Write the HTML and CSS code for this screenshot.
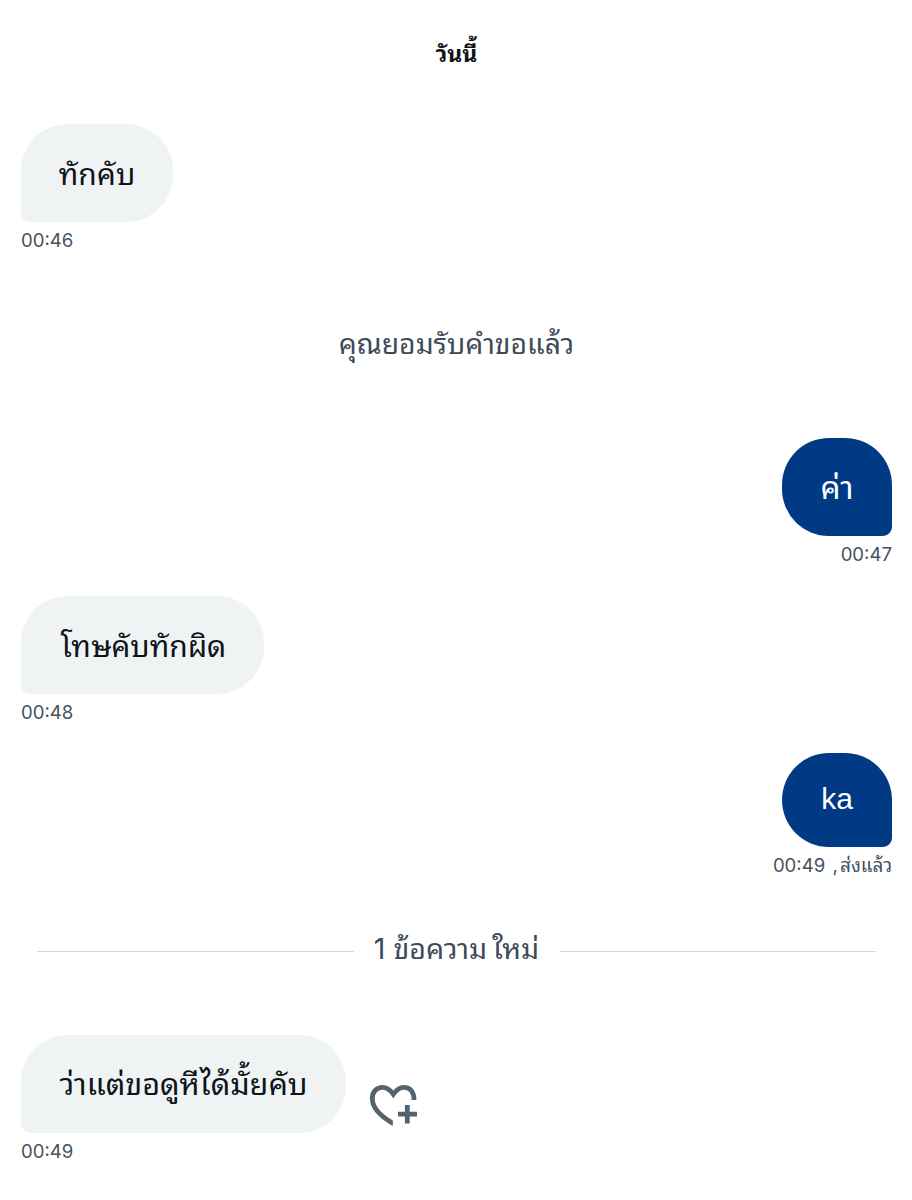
FILE: index.html
```html
<!DOCTYPE html>
<html lang="th"><head><meta charset="utf-8"><title>ข้อความ</title><link rel="stylesheet" href="styles.css"></head>
<body><main class="chat">
<h1 class="day"><span>วันนี้</span></h1>
<section class="message first"><div class="bubble b1"><span>ทักคับ</span></div><time>00:46</time></section>
<p class="notice"><span>คุณยอมรับคำขอแล้ว</span></p>
<section class="message sent second"><div class="bubble b2"><span>ค่า</span></div><time>00:47</time></section>
<section class="message third"><div class="bubble b3"><span>โทษคับทักผิด</span></div><time>00:48</time></section>
<section class="message sent fourth"><div class="bubble b4"><span>ka</span></div><time>00:49 <span class="status">, ส่งแล้ว</span></time></section>
<div class="divider"><span>1 ข้อความ<span class="new">ใหม่</span></span></div>
<section class="message fifth"><div class="row"><div class="bubble b5"><span>ว่าแต่ขอดูหีได้มั้ยคับ</span></div>
<svg class="heart" width="50" height="44" viewBox="0 0 50 44" aria-label="เพิ่มการตอบสนอง"><clipPath id="heart-edge"><path d="M0 0H50V20H24.800V44H0Z"/></clipPath><path clip-path="url(#heart-edge)" d="M28 42C12 33.500 4.300 24 4.300 15.500C4.300 8.500 9 4.300 14.500 4.300C19 4.300 22 6.500 25.300 11.200C28.500 6.500 31.500 4.300 36 4.300C42 4.300 46 8.500 46 17"/><path d="M39.300 22V40.500M30 31.200H49"/></svg></div><time>00:49</time></section>
</main></body></html>
```
FILE: styles.css
```css
* { box-sizing: border-box; }
body { margin: 0; background: #fff; color: #0f1419; font-family: Inter, "Noto Sans Thai Looped", "Noto Looped Thai", Loma, Garuda, "Noto Sans Thai", "Noto Sans", sans-serif; }
.chat { width: 912px; height: 1200px; padding: 34px 20px 0 21px; overflow: hidden; }
.day { height: 40px; margin: 0; text-align: center; font-size: 23px; line-height: 41px; }
.message { display: flex; flex-direction: column; align-items: flex-start; }
.sent { align-items: flex-end; }
.bubble { display: flex; align-items: center; justify-content: center; height: 98px; padding-bottom: 4px; background: #eff3f4; border-radius: 47px 47px 47px 9px; font-size: 30px; white-space: nowrap; }
.sent .bubble { background: #003a85; color: #fff; border-radius: 47px 47px 9px 47px; }
time { height: 24px; margin-top: 7px; color: #47535f; font-size: 18.6px; line-height: 23px; white-space: nowrap; }
.status { margin-left: 2px; font-size: 19px; word-spacing: -3px; letter-spacing: -0.1px; }
.first { margin-top: 50px; }
.b1 { width: 152px; }
.notice { height: 40px; margin: 71px 0 0; text-align: center; color: #3d4b59; font-size: 28.3px; line-height: 40px; }
.second { margin-top: 74px; }
.b2, .b4 { width: 110px; }
.sent .b2 { font-size: 31.5px; }
.third { margin-top: 29px; }
.b3 { width: 243px; padding-left: 2px; }
.fourth { margin-top: 28px; }
.sent .b4 { height: 94px; padding: 0 0 3px; font-family: "Liberation Sans", Arial, sans-serif; font-size: 30px; }
.divider { display: flex; align-items: center; height: 40px; margin: 53px 16px 0; gap: 20px; color: #3d4b59; font-size: 28.5px; line-height: 40px; white-space: nowrap; }
.divider > span { width: 166px; height: 40px; margin-top: -4px; text-align: center; }
.new { margin-left: 5px; }
.divider::before, .divider::after { content: ""; height: 1px; flex: 1; background: #cfd9de; }
.fifth { margin-top: 64px; }
.row { display: flex; align-items: center; gap: 22px; }
.b5 { width: 325px; padding-bottom: 5px; font-size: 30.6px; }
.heart { margin-top: 42px; fill: none; stroke: #536471; stroke-width: 4.8; }
```
